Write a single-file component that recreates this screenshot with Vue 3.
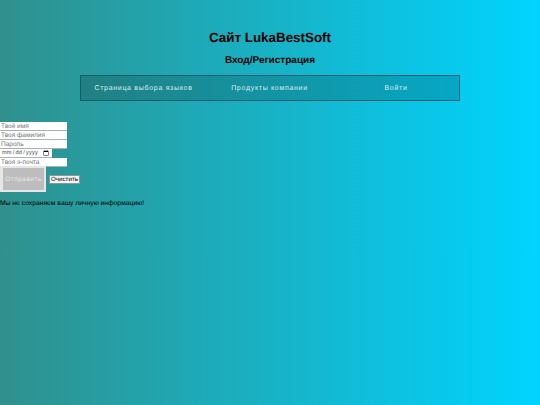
<script setup>
const links = ["Страница выбора языков", "Продукты компании", "Войти"];
</script>

<template>
  <div class="page">
    <header class="head">
      <h1>Сайт LukaBestSoft</h1>
      <h2>Вход/Регистрация</h2>
      <nav class="menu">
        <a v-for="link in links" :key="link" href="#">{{ link }}</a>
      </nav>
    </header>

    <form class="form" @submit.prevent>
      <input type="text" placeholder="Твоё имя" />
      <input type="text" placeholder="Твоя фамилия" />
      <input type="password" placeholder="Пароль" />
      <input class="date" type="date" />
      <input type="email" placeholder="Твоя э-почта" />
      <div class="buttons">
        <button class="send" type="submit">Отправить</button>
        <button class="clear" type="reset">Очистить</button>
      </div>
    </form>

    <p class="note">Мы не сохраняем вашу личную информацию!</p>
  </div>
</template>

<style scoped>
.page {
  height: 405px;
  overflow: hidden;
  background: linear-gradient(to right, #30908c, #00d4ff);
  font-family: "Liberation Sans", Arial, sans-serif;
  color: #000;
  text-rendering: geometricPrecision;
}

.head {
  display: flex;
  flex-direction: column;
  align-items: center;
  padding-top: 30px;
}

h1 {
  margin: 0;
  font-size: 13.4px;
  line-height: 16px;
  font-weight: bold;
}

h2 {
  margin: 9px 0 0;
  font-size: 10px;
  line-height: 12px;
  font-weight: bold;
}

.menu {
  box-sizing: border-box;
  width: 380px;
  height: 26px;
  margin-top: 8px;
  display: grid;
  grid-template-columns: 125px 127px 1fr;
  align-items: center;
  border: 1px solid #0d5f70;
  background: rgba(0, 0, 0, 0.17);
}

.menu a {
  color: #d8edf0;
  font-size: 7px;
  letter-spacing: 0.7px;
  text-align: center;
  text-decoration: none;
}

.form {
  margin-top: 21px;
  display: flex;
  flex-direction: column;
  align-items: flex-start;
}

input {
  box-sizing: border-box;
  width: 67px;
  height: 9px;
  padding: 0 1px;
  border: 0;
  border-bottom: 1px solid #a8b4b4;
  background: #fff;
  font-family: "Liberation Sans", Arial, sans-serif;
  font-size: 6.5px;
  color: #444;
  outline: none;
  text-rendering: geometricPrecision;
}

.date {
  width: 52px;
  font-size: 5.6px;
  letter-spacing: 0.2px;
}

.buttons {
  display: flex;
  align-items: center;
  gap: 3px;
  margin-top: -1px;
}

.send {
  box-sizing: border-box;
  width: 46px;
  height: 26px;
  padding: 0;
  border: 2px solid #e6e6e6;
  border-left-width: 3px;
  background: #bdbdbd;
  color: #e6e6e6;
  font-family: "Liberation Sans", Arial, sans-serif;
  font-size: 6.5px;
  letter-spacing: 0.5px;
  text-rendering: geometricPrecision;
}

.clear {
  box-sizing: border-box;
  width: 31px;
  height: 9px;
  padding: 0;
  border: 1px solid #8a9a9a;
  background: #f4f4f4;
  color: #000;
  font-family: "Liberation Sans", Arial, sans-serif;
  font-size: 6.2px;
  text-rendering: geometricPrecision;
}

.note {
  margin: 8px 0 0;
  font-size: 6.75px;
  line-height: 8px;
}
</style>

<style>
html,
body {
  margin: 0;
}
</style>
